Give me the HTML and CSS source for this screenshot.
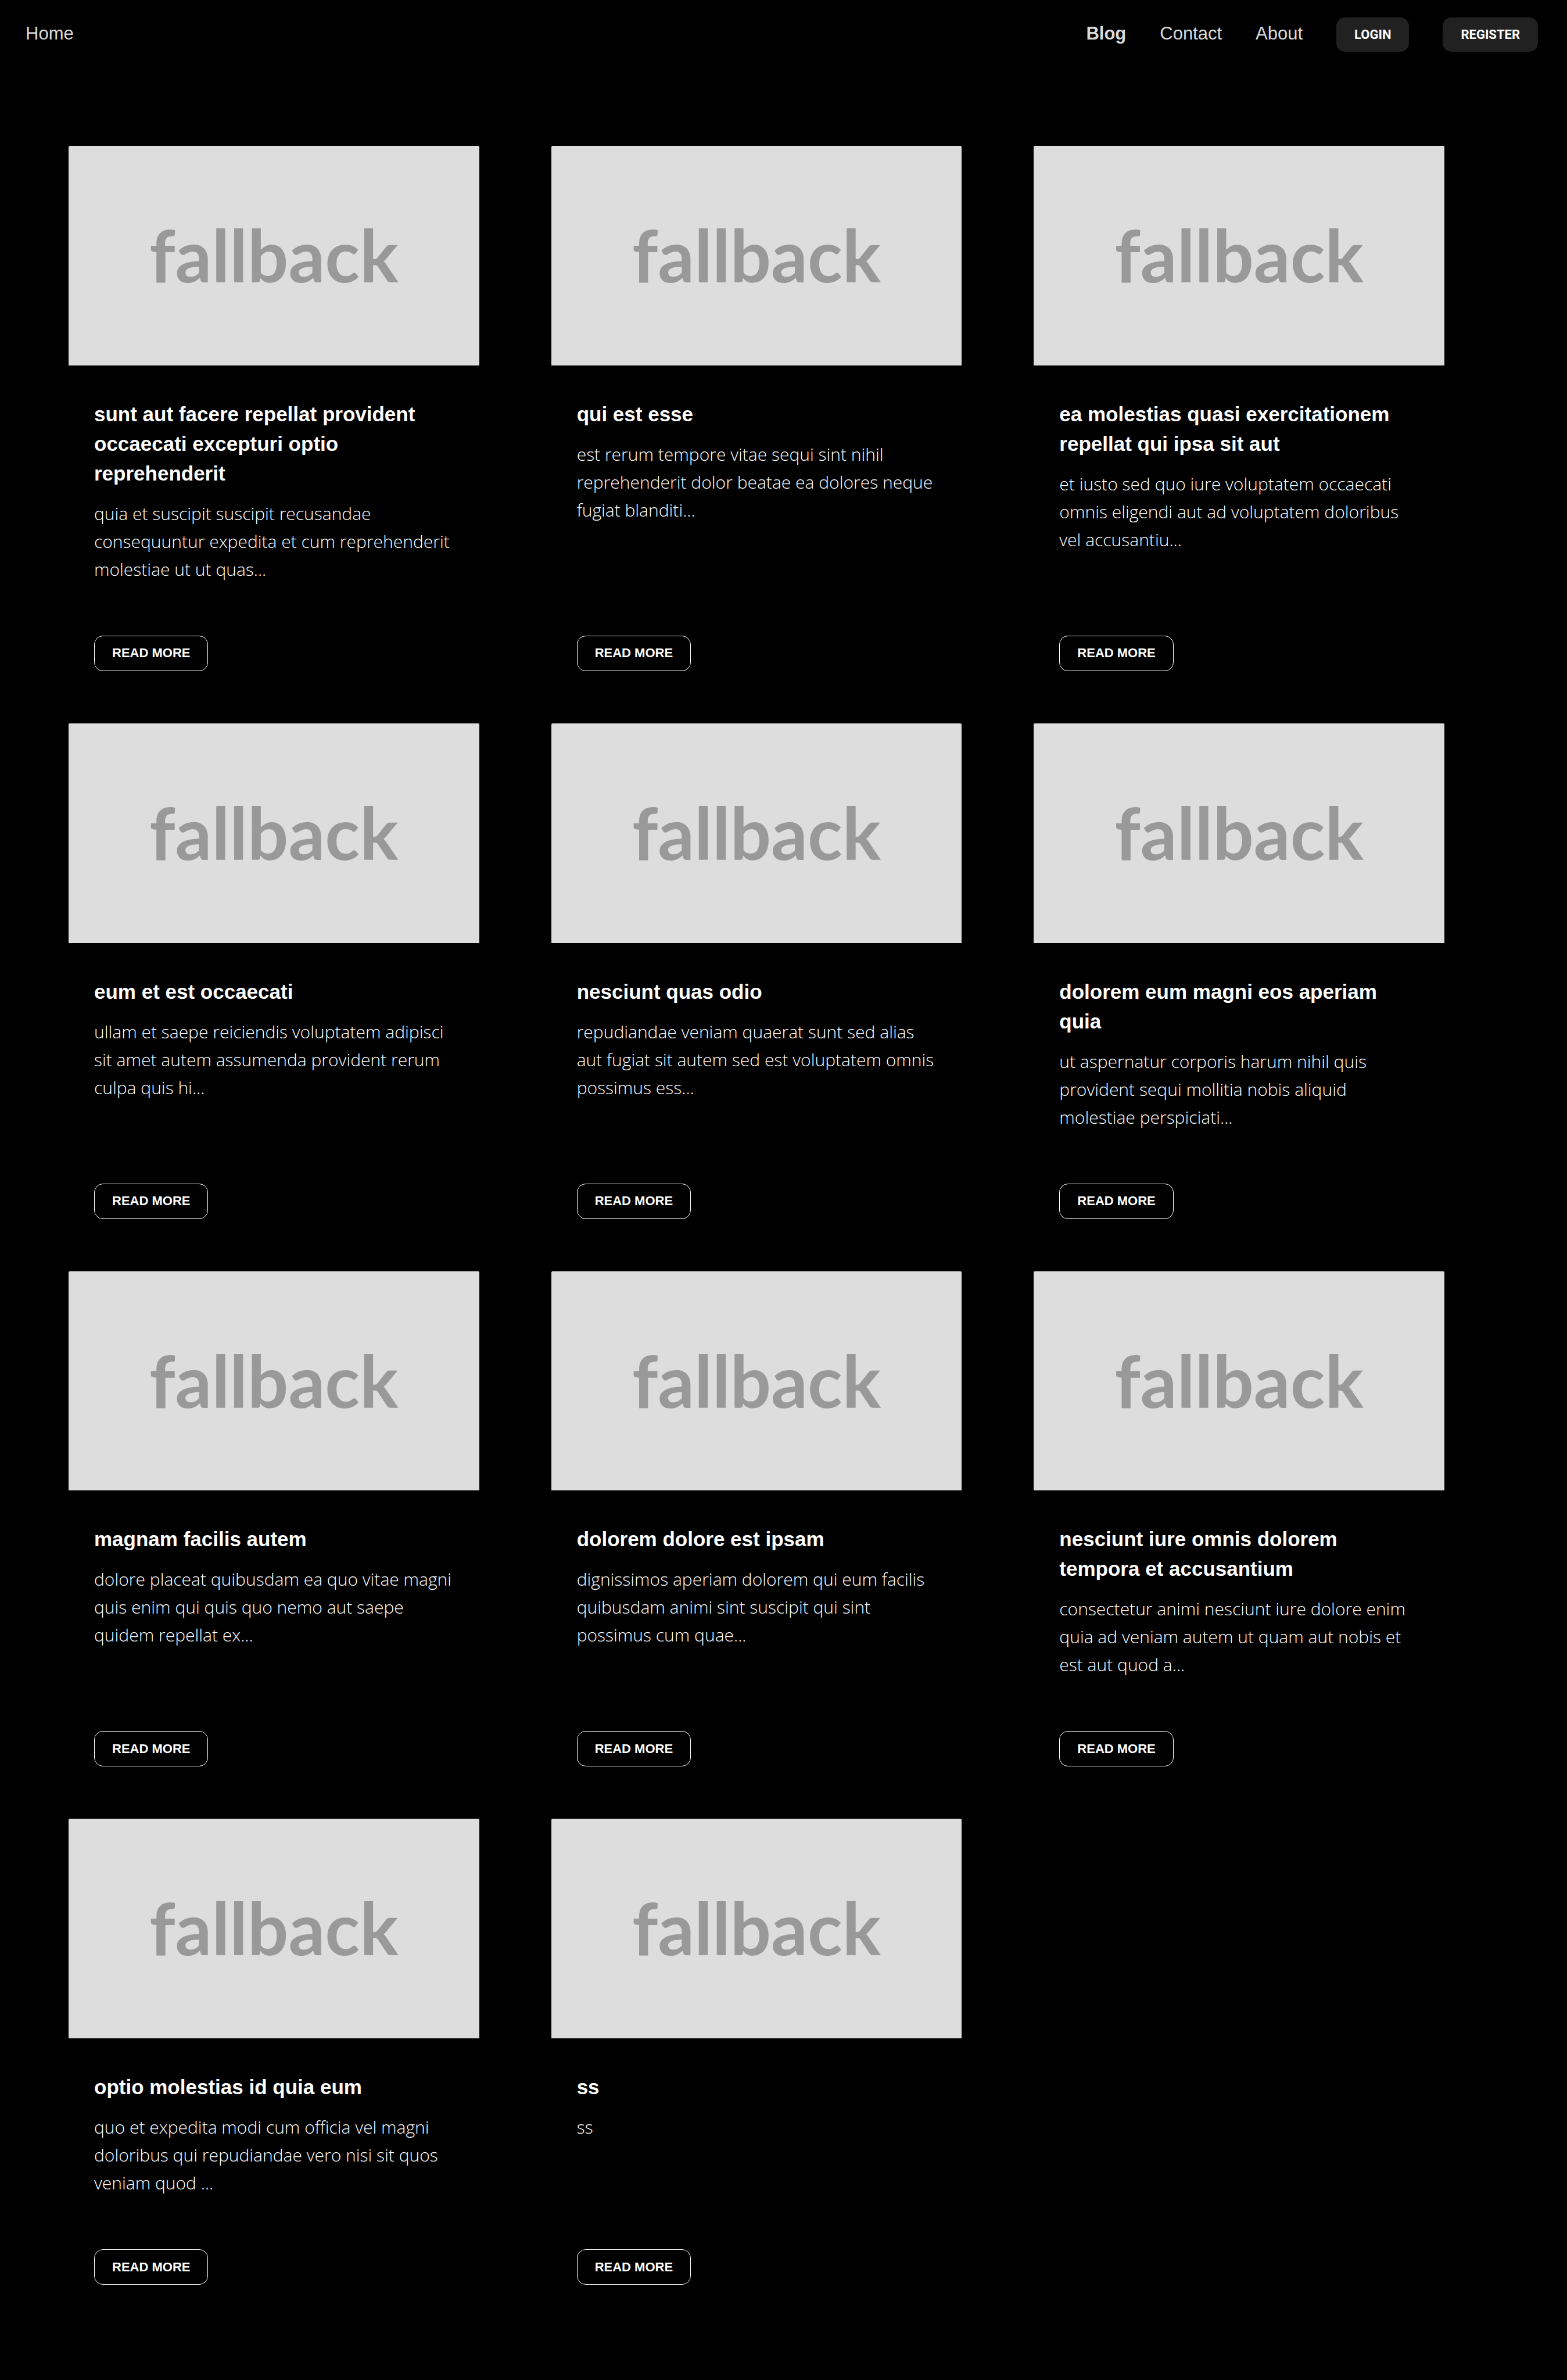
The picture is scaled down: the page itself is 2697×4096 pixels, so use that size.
FILE: index.html
```html
<!DOCTYPE html>
<html lang="en">
<head>
<meta charset="utf-8">
<meta name="viewport" content="width=device-width, initial-scale=1">
<title>Blog</title>
<link rel="stylesheet" href="styles.css">
</head>
<body>
<header class="navbar">
  <a class="nav-link" href="#home">Home</a>
  <nav class="nav-menu" aria-label="Main">
    <a class="nav-link active" href="#blog" aria-current="page">Blog</a>
    <a class="nav-link" href="#contact">Contact</a>
    <a class="nav-link" href="#about">About</a>
    <button class="btn btn-solid" type="button">LOGIN</button>
    <button class="btn btn-solid" type="button">REGISTER</button>
  </nav>
</header>
<main class="posts">
  <article class="card">
    <div class="card-image">fallback</div>
    <div class="card-body">
      <h2 class="card-title">sunt aut facere repellat provident occaecati excepturi optio reprehenderit</h2>
      <p class="card-text">quia et suscipit suscipit recusandae consequuntur expedita et cum reprehenderit molestiae ut ut quas...</p>
      <button class="btn btn-outline" type="button">READ MORE</button>
    </div>
  </article>
  <article class="card">
    <div class="card-image">fallback</div>
    <div class="card-body">
      <h2 class="card-title">qui est esse</h2>
      <p class="card-text">est rerum tempore vitae sequi sint nihil reprehenderit dolor beatae ea dolores neque fugiat blanditi...</p>
      <button class="btn btn-outline" type="button">READ MORE</button>
    </div>
  </article>
  <article class="card">
    <div class="card-image">fallback</div>
    <div class="card-body">
      <h2 class="card-title">ea molestias quasi exercitationem repellat qui ipsa sit aut</h2>
      <p class="card-text">et iusto sed quo iure voluptatem occaecati omnis eligendi aut ad voluptatem doloribus vel accusantiu...</p>
      <button class="btn btn-outline" type="button">READ MORE</button>
    </div>
  </article>
  <article class="card">
    <div class="card-image">fallback</div>
    <div class="card-body">
      <h2 class="card-title">eum et est occaecati</h2>
      <p class="card-text">ullam et saepe reiciendis voluptatem adipisci sit amet autem assumenda provident rerum culpa quis hi...</p>
      <button class="btn btn-outline" type="button">READ MORE</button>
    </div>
  </article>
  <article class="card">
    <div class="card-image">fallback</div>
    <div class="card-body">
      <h2 class="card-title">nesciunt quas odio</h2>
      <p class="card-text">repudiandae veniam quaerat sunt sed alias aut fugiat sit autem sed est voluptatem omnis possimus ess...</p>
      <button class="btn btn-outline" type="button">READ MORE</button>
    </div>
  </article>
  <article class="card">
    <div class="card-image">fallback</div>
    <div class="card-body">
      <h2 class="card-title">dolorem eum magni eos aperiam quia</h2>
      <p class="card-text">ut aspernatur corporis harum nihil quis provident sequi mollitia nobis aliquid molestiae perspiciati...</p>
      <button class="btn btn-outline" type="button">READ MORE</button>
    </div>
  </article>
  <article class="card">
    <div class="card-image">fallback</div>
    <div class="card-body">
      <h2 class="card-title">magnam facilis autem</h2>
      <p class="card-text">dolore placeat quibusdam ea quo vitae magni quis enim qui quis quo nemo aut saepe quidem repellat ex...</p>
      <button class="btn btn-outline" type="button">READ MORE</button>
    </div>
  </article>
  <article class="card">
    <div class="card-image">fallback</div>
    <div class="card-body">
      <h2 class="card-title">dolorem dolore est ipsam</h2>
      <p class="card-text">dignissimos aperiam dolorem qui eum facilis quibusdam animi sint suscipit qui sint possimus cum quae...</p>
      <button class="btn btn-outline" type="button">READ MORE</button>
    </div>
  </article>
  <article class="card">
    <div class="card-image">fallback</div>
    <div class="card-body">
      <h2 class="card-title">nesciunt iure omnis dolorem tempora et accusantium</h2>
      <p class="card-text">consectetur animi nesciunt iure dolore enim quia ad veniam autem ut quam aut nobis et est aut quod a...</p>
      <button class="btn btn-outline" type="button">READ MORE</button>
    </div>
  </article>
  <article class="card">
    <div class="card-image">fallback</div>
    <div class="card-body">
      <h2 class="card-title">optio molestias id quia eum</h2>
      <p class="card-text">quo et expedita modi cum officia vel magni doloribus qui repudiandae vero nisi sit quos veniam quod ...</p>
      <button class="btn btn-outline" type="button">READ MORE</button>
    </div>
  </article>
  <article class="card">
    <div class="card-image">fallback</div>
    <div class="card-body">
      <h2 class="card-title">ss</h2>
      <p class="card-text">ss</p>
      <button class="btn btn-outline" type="button">READ MORE</button>
    </div>
  </article>
</main>
</body>
</html>
```
FILE: styles.css
```css
* {
  box-sizing: border-box;
}

body {
  margin: 0;
  background: #000;
  color: #fff;
  font-family: "Liberation Sans", Arial, sans-serif;
}

.navbar {
  display: flex;
  align-items: center;
  justify-content: space-between;
  padding: 30px 50px 0 44px;
}

.nav-menu {
  display: flex;
  align-items: center;
  gap: 58px;
}

.nav-link {
  padding-bottom: 3px;
  color: #d9d9d9;
  font-size: 31px;
  line-height: 40px;
  text-decoration: none;
}

.nav-link.active {
  font-weight: 700;
}

.btn {
  padding: 0 30px;
  border: 0;
  border-radius: 15px;
  color: #fff;
  font-family: inherit;
  font-size: 22px;
  font-weight: 700;
  white-space: nowrap;
  cursor: pointer;
}

.btn-solid {
  height: 59px;
  padding: 0 31px;
  background: #212121;
  font-family: Roboto, sans-serif;
}

.btn-outline {
  height: 61px;
  margin-top: auto;
  border: 1px solid #fff;
  background: transparent;
}

.posts {
  display: grid;
  grid-template-columns: repeat(3, 1fr);
  gap: 90px 124px;
  padding: 162px 211px 161px 118px;
}

.card {
  display: flex;
  flex-direction: column;
}

.card-image {
  display: flex;
  align-items: center;
  justify-content: center;
  aspect-ratio: 707 / 378;
  padding-bottom: 4px;
  border-radius: 2px 2px 0 0;
  background: #ddd;
  color: #999;
  font: 700 124px/1 Lato, sans-serif;
}

.card-body {
  flex: 1;
  display: flex;
  flex-direction: column;
  align-items: flex-start;
  padding: 58px 43px 0 44px;
}

.card-title {
  margin: 0 0 20px;
  font-size: 35px;
  font-weight: 700;
  line-height: 51px;
}

.card-text {
  min-height: 144px;
  margin: 0 0 90px;
  font-family: "Open Sans", "Noto Sans", sans-serif;
  font-size: 30px;
  font-weight: 300;
  line-height: 48px;
}
```
